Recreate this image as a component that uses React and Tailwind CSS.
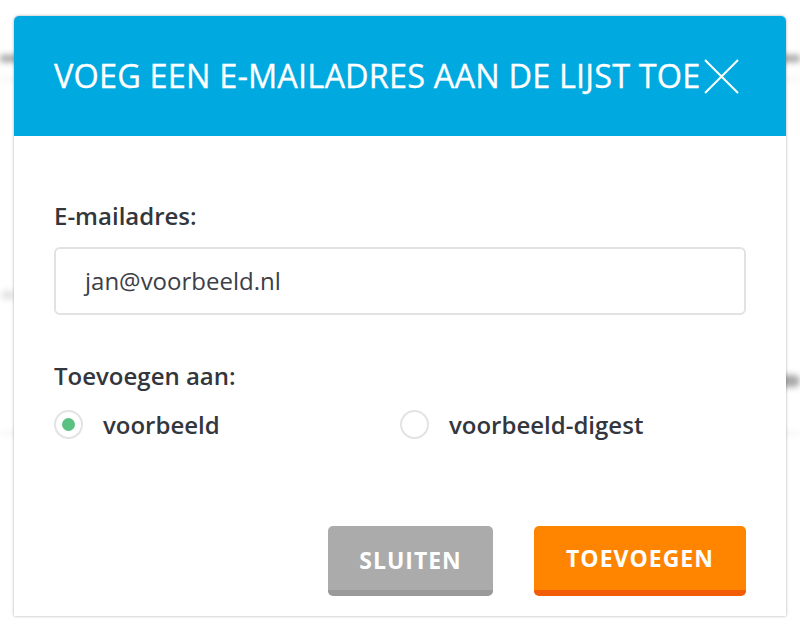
import React from "react";

export default function App() {
  return (
    <div className="relative w-[800px] h-[638px] bg-white overflow-hidden" style={{ fontFamily: '"Open Sans", sans-serif' }}>
      {/* blurred page content behind the dialog */}
      <div className="flex flex-col blur-[3px] opacity-80">
        <div className="mt-[55px] h-[7px] bg-[#8a8a8a] mx-0" />
        <div className="mt-[16px] h-[3px] bg-[#eeeeee]" />
        <div className="mt-[210px] ml-[2px] w-[12px] h-[8px] bg-[#d8d8d8]" />
        <div className="mt-[76px] flex justify-end">
          <div className="w-[30px] h-[12px] bg-[#8f8f8f] rounded-full" />
        </div>
        <div className="mt-[45px] h-[3px] bg-[#eeeeee]" />
      </div>

      {/* dialog */}
      <div className="absolute left-[14px] top-[16px] w-[772px] h-[600px] bg-white rounded-t-[5px] shadow-[0_0_3px_rgba(0,0,0,0.35)] flex flex-col">
        <div className="h-[120px] bg-[#00aae0] rounded-t-[5px] flex items-center justify-between pl-[40px] pr-[47px]">
          <h1 className="text-white text-[32.5px] leading-[32px] font-normal tracking-[0.15px] whitespace-nowrap [-webkit-text-stroke:0.3px_white]">
            VOEG EEN E-MAILADRES AAN DE LIJST TOE
          </h1>
          <svg width="35" height="35" viewBox="0 0 35 35" className="shrink-0">
            <path d="M1 1 L34 34 M34 1 L1 34" stroke="white" strokeWidth="2" fill="none" />
          </svg>
        </div>

        <div className="flex-1 flex flex-col px-[40px] pb-[20px]">
          <label className="mt-[64px] text-[24px] leading-[32px] font-semibold text-[#33373d]">E-mailadres:</label>
          <div className="mt-[15px] h-[68px] border-2 border-[#e2e2e2] rounded-[6px] flex items-center pl-[29px]">
            <span className="text-[24px] text-[#3c4046]">jan@voorbeeld.nl</span>
          </div>

          <div className="mt-[45px] text-[24px] leading-[32px] font-semibold text-[#33373d]">Toevoegen aan:</div>

          <div className="mt-[18px] grid grid-cols-2">
            <div className="flex items-center gap-[20px]">
              <div className="w-[29px] h-[29px] rounded-full border-2 border-[#e3e3e3] flex items-center justify-center">
                <div className="w-[13px] h-[13px] rounded-full bg-[#5ac183]" />
              </div>
              <span className="text-[24px] leading-[29px] font-semibold text-[#33373d]">voorbeeld</span>
            </div>
            <div className="flex items-center gap-[20px]">
              <div className="w-[29px] h-[29px] rounded-full border-2 border-[#e3e3e3]" />
              <span className="text-[24px] leading-[29px] font-semibold text-[#33373d]">voorbeeld-digest</span>
            </div>
          </div>

          <div className="mt-auto flex justify-end gap-[41px]">
            <button className="w-[165px] h-[70px] bg-[#ababab] border-b-[6px] border-[#9a9a9a] rounded-[5px] text-white text-[23px] font-bold tracking-[1px] pt-[4px]">
              SLUITEN
            </button>
            <button className="w-[212px] h-[70px] bg-[#ff8500] border-b-[6px] border-[#f25c05] rounded-[5px] text-white text-[23px] font-bold tracking-[1px]">
              TOEVOEGEN
            </button>
          </div>
        </div>
      </div>
    </div>
  );
}
